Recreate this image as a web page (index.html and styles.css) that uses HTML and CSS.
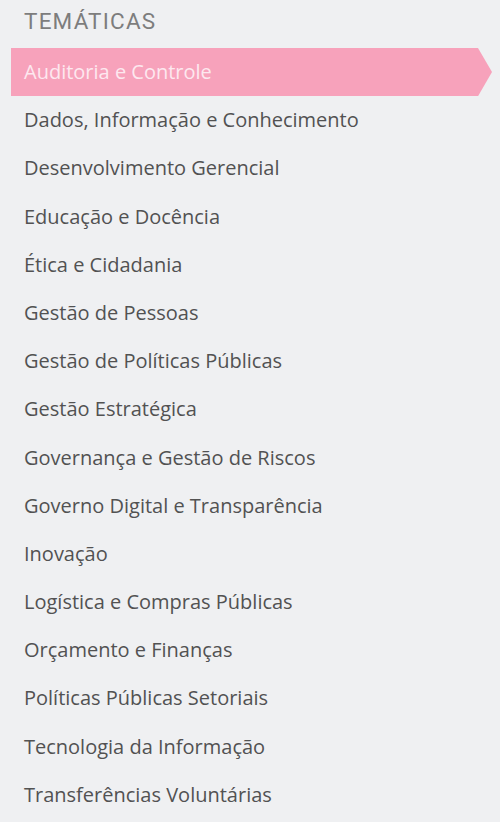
FILE: index.html
```html
<!DOCTYPE html>
<html lang="pt-BR">
<head>
    <meta charset="UTF-8">
    <meta name="viewport" content="width=device-width, initial-scale=1.0">
    <title>Temáticas</title>
    <link rel="stylesheet" href="styles.css">
</head>
<body>
    <div class="tematicas">
        <h2 class="tematicas-title">TEMÁTICAS</h2>
        <ul class="tematicas-list">
            <li class="tematica active">Auditoria e Controle</li>
            <li class="tematica">Dados, Informação e Conhecimento</li>
            <li class="tematica">Desenvolvimento Gerencial</li>
            <li class="tematica">Educação e Docência</li>
            <li class="tematica">Ética e Cidadania</li>
            <li class="tematica">Gestão de Pessoas</li>
            <li class="tematica">Gestão de Políticas Públicas</li>
            <li class="tematica">Gestão Estratégica</li>
            <li class="tematica">Governança e Gestão de Riscos</li>
            <li class="tematica">Governo Digital e Transparência</li>
            <li class="tematica">Inovação</li>
            <li class="tematica">Logística e Compras Públicas</li>
            <li class="tematica">Orçamento e Finanças</li>
            <li class="tematica">Políticas Públicas Setoriais</li>
            <li class="tematica">Tecnologia da Informação</li>
            <li class="tematica">Transferências Voluntárias</li>
        </ul>
    </div>
</body>
</html>
```

FILE: styles.css
```css
/* base */
body {
    margin: 0;
    background-color: #eff0f2;
    font-family: 'Open Sans', 'Noto Sans', sans-serif;
    height: 822px;
    overflow: hidden;
}

.tematicas {
    padding-left: 11px;
}

.tematicas-title {
    margin: 0;
    padding: 6px 0 0 13px;
    height: 48px;
    box-sizing: border-box;
    font-family: Roboto, 'Liberation Sans', sans-serif;
    font-weight: 400;
    font-size: 22.5px;
    letter-spacing: 1.2px;
    line-height: 30px;
    color: #7d7d7d;
}

.tematicas-list {
    list-style: none;
    margin: 0;
    padding: 0;
}

.tematica {
    height: 48.2px;
    line-height: 48px;
    padding-left: 13px;
    font-size: 20px;
    color: #525252;
}

/* item selecionado com seta */
.tematica.active {
    width: 481px;
    box-sizing: border-box;
    background-color: #f7a2bb;
    color: #fde8ef;
    clip-path: polygon(0 0, 467px 0, 100% 50%, 467px 100%, 0 100%);
}
```
